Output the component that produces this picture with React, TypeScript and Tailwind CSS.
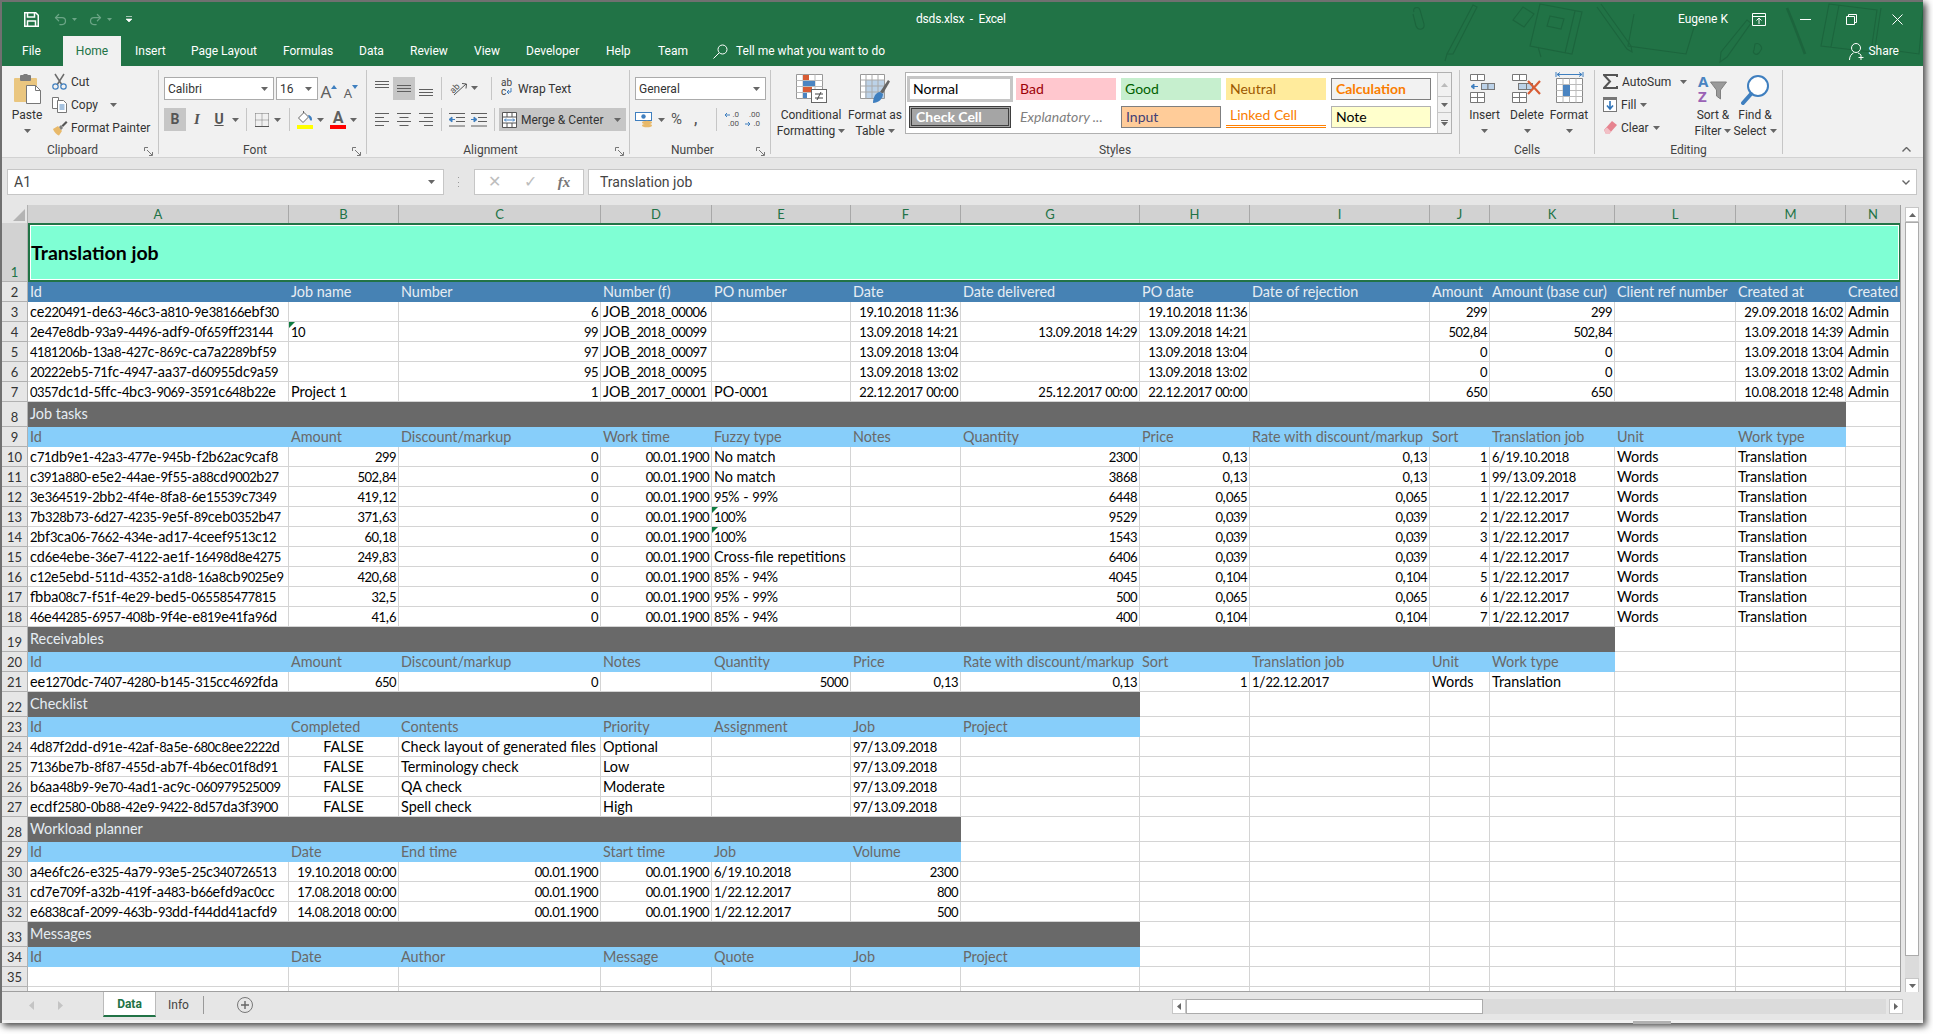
import { Redo2, Undo2 } from "lucide-react";
import type { ReactNode } from "react";

type Cell = string | { text: string; align?: "right" | "center"; mark?: boolean };

interface Row {
  n: number;
  kind: "title" | "head" | "band" | "sub" | "data";
  cells: Cell[];
  span?: number;
}

const R = (text: string): Cell => ({ text, align: "right" });
const C = (text: string): Cell => ({ text, align: "center" });
const M = (text: string): Cell => ({ text, mark: true });

const COLUMNS = ["A", "B", "C", "D", "E", "F", "G", "H", "I", "J", "K", "L", "M", "N"];
const COLUMN_WIDTHS: Record<string, string> = {
  A: "w-[261px]",
  B: "w-[110px]",
  C: "w-[202px]",
  D: "w-[111px]",
  E: "w-[139px]",
  F: "w-[110px]",
  G: "w-[179px]",
  H: "w-[110px]",
  I: "w-[180px]",
  J: "w-[60px]",
  K: "w-[125px]",
  L: "w-[121px]",
  M: "w-[110px]",
  N: "w-[55px]",
};

const SPANS: Record<number, string> = {
  6: "col-span-6",
  7: "col-span-7",
  11: "col-span-11",
  13: "col-span-13",
  14: "col-span-14",
};

const taskRow = (
  n: number,
  id: string,
  amount: string,
  fuzzy: Cell,
  qty: string,
  price: string,
  sort: string,
  job: string,
): Row => ({
  n,
  kind: "data",
  cells: [id, R(amount), R("0"), R("00.01.1900"), fuzzy, "", R(qty), R(price), R(price), R(sort), job, "Words", "Translation", ""],
});

const checkRow = (n: number, id: string, contents: string, priority: string): Row => ({
  n,
  kind: "data",
  cells: [id, C("FALSE"), contents, priority, "", "97/13.09.2018", ""],
});

const plannerRow = (n: number, id: string, date: string, job: string, volume: string): Row => ({
  n,
  kind: "data",
  cells: [id, R(date), R("00.01.1900"), R("00.01.1900"), job, R(volume)],
});

const ROWS: Row[] = [
  { n: 1, kind: "title", span: 14, cells: ["Translation job"] },
  {
    n: 2,
    kind: "head",
    cells: ["Id", "Job name", "Number", "Number (f)", "PO number", "Date", "Date delivered", "PO date", "Date of rejection", "Amount", "Amount (base cur)", "Client ref number", "Created at", "Created"],
  },
  {
    n: 3,
    kind: "data",
    cells: ["ce220491-de63-46c3-a810-9e38166ebf30", "", R("6"), "JOB_2018_00006", "", R("19.10.2018 11:36"), "", R("19.10.2018 11:36"), "", R("299"), R("299"), "", R("29.09.2018 16:02"), "Admin"],
  },
  {
    n: 4,
    kind: "data",
    cells: ["2e47e8db-93a9-4496-adf9-0f659ff23144", M("10"), R("99"), "JOB_2018_00099", "", R("13.09.2018 14:21"), R("13.09.2018 14:29"), R("13.09.2018 14:21"), "", R("502,84"), R("502,84"), "", R("13.09.2018 14:39"), "Admin"],
  },
  {
    n: 5,
    kind: "data",
    cells: ["4181206b-13a8-427c-869c-ca7a2289bf59", "", R("97"), "JOB_2018_00097", "", R("13.09.2018 13:04"), "", R("13.09.2018 13:04"), "", R("0"), R("0"), "", R("13.09.2018 13:04"), "Admin"],
  },
  {
    n: 6,
    kind: "data",
    cells: ["20222eb5-71fc-4947-aa37-d60955dc9a59", "", R("95"), "JOB_2018_00095", "", R("13.09.2018 13:02"), "", R("13.09.2018 13:02"), "", R("0"), R("0"), "", R("13.09.2018 13:02"), "Admin"],
  },
  {
    n: 7,
    kind: "data",
    cells: ["0357dc1d-5ffc-4bc3-9069-3591c648b22e", "Project 1", R("1"), "JOB_2017_00001", "PO-0001", R("22.12.2017 00:00"), R("25.12.2017 00:00"), R("22.12.2017 00:00"), "", R("650"), R("650"), "", R("10.08.2018 12:48"), "Admin"],
  },
  { n: 8, kind: "band", span: 13, cells: ["Job tasks"] },
  {
    n: 9,
    kind: "sub",
    cells: ["Id", "Amount", "Discount/markup", "Work time", "Fuzzy type", "Notes", "Quantity", "Price", "Rate with discount/markup", "Sort", "Translation job", "Unit", "Work type"],
  },
  taskRow(10, "c71db9e1-42a3-477e-945b-f2b62ac9caf8", "299", "No match", "2300", "0,13", "1", "6/19.10.2018"),
  taskRow(11, "c391a880-e5e2-44ae-9f55-a88cd9002b27", "502,84", "No match", "3868", "0,13", "1", "99/13.09.2018"),
  taskRow(12, "3e364519-2bb2-4f4e-8fa8-6e15539c7349", "419,12", "95% - 99%", "6448", "0,065", "1", "1/22.12.2017"),
  taskRow(13, "7b328b73-6d27-4235-9e5f-89ceb0352b47", "371,63", M("100%"), "9529", "0,039", "2", "1/22.12.2017"),
  taskRow(14, "2bf3ca06-7662-434e-ad17-4ceef9513c12", "60,18", M("100%"), "1543", "0,039", "3", "1/22.12.2017"),
  taskRow(15, "cd6e4ebe-36e7-4122-ae1f-16498d8e4275", "249,83", "Cross-file repetitions", "6406", "0,039", "4", "1/22.12.2017"),
  taskRow(16, "c12e5ebd-511d-4352-a1d8-16a8cb9025e9", "420,68", "85% - 94%", "4045", "0,104", "5", "1/22.12.2017"),
  taskRow(17, "fbba08c7-f51f-4e29-bed5-065585477815", "32,5", "95% - 99%", "500", "0,065", "6", "1/22.12.2017"),
  taskRow(18, "46e44285-6957-408b-9f4e-e819e41fa96d", "41,6", "85% - 94%", "400", "0,104", "7", "1/22.12.2017"),
  { n: 19, kind: "band", span: 11, cells: ["Receivables"] },
  {
    n: 20,
    kind: "sub",
    cells: ["Id", "Amount", "Discount/markup", "Notes", "Quantity", "Price", "Rate with discount/markup", "Sort", "Translation job", "Unit", "Work type"],
  },
  {
    n: 21,
    kind: "data",
    cells: ["ee1270dc-7407-4280-b145-315cc4692fda", R("650"), R("0"), "", R("5000"), R("0,13"), R("0,13"), R("1"), "1/22.12.2017", "Words", "Translation"],
  },
  { n: 22, kind: "band", span: 7, cells: ["Checklist"] },
  { n: 23, kind: "sub", cells: ["Id", "Completed", "Contents", "Priority", "Assignment", "Job", "Project"] },
  checkRow(24, "4d87f2dd-d91e-42af-8a5e-680c8ee2222d", "Check layout of generated files", "Optional"),
  checkRow(25, "7136be7b-8f87-455d-ab7f-4b6ec01f8d91", "Terminology check", "Low"),
  checkRow(26, "b6aa48b9-9e70-4ad1-ac9c-060979525009", "QA check", "Moderate"),
  checkRow(27, "ecdf2580-0b88-42e9-9422-8d57da3f3900", "Spell check", "High"),
  { n: 28, kind: "band", span: 6, cells: ["Workload planner"] },
  { n: 29, kind: "sub", cells: ["Id", "Date", "End time", "Start time", "Job", "Volume"] },
  plannerRow(30, "a4e6fc26-e325-4a79-93e5-25c340726513", "19.10.2018 00:00", "6/19.10.2018", "2300"),
  plannerRow(31, "cd7e709f-a32b-419f-a483-b66efd9ac0cc", "17.08.2018 00:00", "1/22.12.2017", "800"),
  plannerRow(32, "e6838caf-2099-463b-93dd-f44dd41acfd9", "14.08.2018 00:00", "1/22.12.2017", "500"),
  { n: 33, kind: "band", span: 7, cells: ["Messages"] },
  { n: 34, kind: "sub", cells: ["Id", "Date", "Author", "Message", "Quote", "Job", "Project"] },
  { n: 35, kind: "data", cells: [] },
  { n: 36, kind: "data", cells: [] },
];

const TABS = [
  { label: "File", cls: "w-[61px] pl-[20px]" },
  { label: "Home", cls: "w-[58px] justify-center bg-[#f1f1f1] text-[#217346]" },
  { label: "Insert", cls: "w-[70px] pl-[14px]" },
  { label: "Page Layout", cls: "w-[92px]" },
  { label: "Formulas", cls: "w-[76px]" },
  { label: "Data", cls: "w-[51px]" },
  { label: "Review", cls: "w-[64px]" },
  { label: "View", cls: "w-[52px]" },
  { label: "Developer", cls: "w-[80px]" },
  { label: "Help", cls: "w-[52px]" },
  { label: "Team", cls: "w-[55px]" },
];

function Caret({ className = "" }: { className?: string }) {
  return (
    <svg width="7" height="4" viewBox="0 0 7 4" className={`shrink-0 ${className}`}>
      <path d="M0 0h7L3.5 4z" fill="#666" />
    </svg>
  );
}

function Sep({ className = "" }: { className?: string }) {
  return <div className={`h-[23px] w-px shrink-0 bg-[#c6c6c6] ${className}`} />;
}

function Lines({ widths, gap = 4, align = "left" }: { widths: number[]; gap?: number; align?: "left" | "center" | "right" }) {
  return (
    <svg width="14" height={(widths.length - 1) * gap + 2} className="shrink-0">
      {widths.map((w, i) => {
        const x = align === "left" ? 0 : align === "right" ? 14 - w : (14 - w) / 2;
        return <rect key={i} x={x} y={i * gap} width={w} height="1" fill="#5f5f5f" />;
      })}
    </svg>
  );
}

function PasteIcon() {
  return (
    <svg width="29" height="30" viewBox="0 0 29 30">
      <rect x="1" y="4" width="23" height="24" rx="1" fill="#eac67f" />
      <rect x="7" y="1" width="11" height="6" rx="1" fill="#7c7c7c" />
      <rect x="10.5" y="0" width="4" height="3" fill="#7c7c7c" />
      <path d="M13.5 11.5h9l5 5v13h-14z" fill="#fff" stroke="#777" />
      <path d="M22.5 11.5v5h5" fill="none" stroke="#777" />
    </svg>
  );
}

function CutIcon() {
  return (
    <svg width="15" height="17" viewBox="0 0 15 17">
      <path d="M3 1l7 11M12 1L5 12" stroke="#6b6b6b" strokeWidth="1.5" fill="none" />
      <circle cx="3.5" cy="13.5" r="2.7" stroke="#3f7fbf" strokeWidth="1.2" fill="none" />
      <circle cx="11.5" cy="13.5" r="2.7" stroke="#3f7fbf" strokeWidth="1.2" fill="none" />
    </svg>
  );
}

function CopyIcon() {
  return (
    <svg width="15" height="16" viewBox="0 0 15 16">
      <path d="M.5.5h6v11h-6z" fill="#fff" stroke="#777" />
      <path d="M5.5 3.5h6l3 3v9h-9z" fill="#fff" stroke="#777" />
      <path d="M7.5 8h5M7.5 10h5M7.5 12h5" stroke="#4c86c0" />
    </svg>
  );
}

function PainterIcon() {
  return (
    <svg width="16" height="16" viewBox="0 0 16 16">
      <path d="M1 9l5-3 4 5-3 4.5C5 15 2 12 1 9z" fill="#e8b96a" />
      <path d="M7 7l2-2 2 3-2 2z" fill="#7c7c7c" />
      <path d="M9.5 5.5L14 1l1.5 1.5L11 7z" fill="#555" />
    </svg>
  );
}

function FontSizeIcon({ up }: { up: boolean }) {
  return (
    <div className={`flex w-[22px] shrink-0 items-end justify-center font-['Noto_Sans',sans-serif] leading-none text-[#5f5f5f] ${up ? "text-[17px]" : "text-[13px]"}`}>
      <span>A</span>
      <svg width="6" height="4" viewBox="0 0 6 4" className="mb-[11px]">
        <path d={up ? "M0 4h6L3 0z" : "M0 0h6L3 4z"} fill="#3f7fbf" />
      </svg>
    </div>
  );
}

function BorderIcon() {
  return (
    <svg width="14" height="14" viewBox="0 0 14 14" className="shrink-0">
      <path d="M.5.5h13M.5 7h13M.5.5v13M7 .5v13M13.5.5v13" stroke="#777" strokeDasharray="1 1" fill="none" />
      <path d="M0 13.5h14" stroke="#555" />
    </svg>
  );
}

function FillColorIcon() {
  return (
    <div className="flex w-[16px] shrink-0 flex-col items-center">
      <svg width="16" height="13" viewBox="0 0 16 13">
        <path d="M1.5 7L7 1.5 11.5 6 6 11.5z" fill="#fff" stroke="#666" />
        <path d="M6.5 2V0" stroke="#666" />
        <path d="M11 4c2 0 4 2 4 4s-1 2-2 1z" fill="#3f7fbf" />
      </svg>
      <div className="mt-[1px] h-[4px] w-[16px] bg-[#ffff00]" />
    </div>
  );
}

function FontColorIcon() {
  return (
    <div className="flex w-[16px] shrink-0 flex-col items-center">
      <span className="h-[13px] text-[16px] leading-[13px] font-bold text-[#5f5f5f]">A</span>
      <div className="mt-[1px] h-[4px] w-[16px] bg-[#ff0000]" />
    </div>
  );
}

function OrientIcon() {
  return (
    <svg width="19" height="17" viewBox="0 0 19 17" className="shrink-0">
      <text x="1" y="12" fontSize="9" fill="#555" transform="rotate(-45 5 9)" fontFamily="Roboto">ab</text>
      <path d="M5 15L17 4M13 3.5l4.5.5-.5 4.5" stroke="#555" fill="none" />
    </svg>
  );
}

function IndentIcon({ inc }: { inc: boolean }) {
  return (
    <svg width="16" height="14" viewBox="0 0 16 14" className="shrink-0">
      <path d="M0 .5h16M7 4.5h9M7 8.5h9M0 13h16" stroke="#5f5f5f" fill="none" />
      {inc ? (
        <path d="M0 6.5h5M3 4l3 2.5L3 9z" stroke="#3f7fbf" fill="#3f7fbf" />
      ) : (
        <path d="M6 6.5H1M3 4L0 6.5 3 9z" stroke="#3f7fbf" fill="#3f7fbf" />
      )}
    </svg>
  );
}

function WrapIcon() {
  return (
    <div className="relative h-[18px] w-[14px] shrink-0 font-['Roboto',sans-serif] text-[10px] leading-[9px] text-[#444]">
      <div>ab</div>
      <div className="flex items-center">
        c
        <svg width="6" height="7" viewBox="0 0 6 7">
          <path d="M5 0v4H1M3 2L1 4l2 2" stroke="#3f7fbf" fill="none" />
        </svg>
      </div>
    </div>
  );
}

function MergeIcon() {
  return (
    <svg width="15" height="16" viewBox="0 0 15 16" className="shrink-0">
      <path d="M.5.5h14v15H.5zM.5 5h14M.5 11h14M5 11v4.5M10 11v4.5M5 .5V5M10 .5V5" fill="#fff" stroke="#555" />
      <path d="M2.5 8h10M4 6.5L2.5 8 4 9.5M11 6.5L12.5 8 11 9.5" stroke="#3f7fbf" fill="none" />
    </svg>
  );
}

function CurrencyIcon() {
  return (
    <svg width="19" height="17" viewBox="0 0 19 17" className="shrink-0">
      <rect x="0.5" y="1.5" width="16" height="8" fill="#fff" stroke="#3f7fbf" />
      <circle cx="8.5" cy="5.5" r="2.2" fill="#3f7fbf" />
      <ellipse cx="12" cy="11.5" rx="5" ry="1.8" fill="#e8b96a" />
      <ellipse cx="12" cy="14.5" rx="5" ry="1.8" fill="#e8b96a" />
    </svg>
  );
}

function DecimalIcon({ inc }: { inc: boolean }) {
  return (
    <div className="flex w-[15px] shrink-0 flex-col font-['Roboto',sans-serif] text-[8px] leading-[8px] text-[#555]">
      <div className="flex items-center justify-between">
        {inc ? (
          <svg width="6" height="6" viewBox="0 0 6 6">
            <path d="M6 3H1M3 1L1 3l2 2" stroke="#3f7fbf" fill="none" />
          </svg>
        ) : (
          <span />
        )}
        <span>{inc ? ".0" : ".00"}</span>
      </div>
      <div className="mt-[1px] flex items-center justify-between">
        {inc ? (
          <span />
        ) : (
          <svg width="6" height="6" viewBox="0 0 6 6">
            <path d="M0 3h5M3 1l2 2-2 2" stroke="#3f7fbf" fill="none" />
          </svg>
        )}
        <span>{inc ? ".00" : ".0"}</span>
      </div>
    </div>
  );
}

function CondFormatIcon() {
  return (
    <svg width="31" height="29" viewBox="0 0 31 29">
      <path d="M.5.5h26v24H.5z" fill="#fff" stroke="#999" />
      <path d="M.5 6.5h26M.5 12.5h26M.5 18.5h26M7 .5v24M19 .5v24" stroke="#bbb" fill="none" />
      <rect x="7" y="1" width="6" height="5" fill="#d85c34" />
      <rect x="7" y="7" width="12" height="5" fill="#4a84c1" />
      <rect x="7" y="13" width="9" height="5" fill="#d85c34" />
      <rect x="7" y="19" width="4" height="5" fill="#4a84c1" />
      <rect x="15.5" y="15.5" width="15" height="13" fill="#fff" stroke="#666" />
      <path d="M19 20h8M19 24h8M25 18l-4 8" stroke="#444" fill="none" />
    </svg>
  );
}

function TableFormatIcon() {
  return (
    <svg width="30" height="30" viewBox="0 0 30 30">
      <path d="M.5.5h24v24H.5z" fill="#fff" stroke="#999" />
      <rect x="5" y="6" width="19" height="18" fill="#bcd2e8" />
      <path d="M.5 6h24M.5 12h24M.5 18h24M6 .5v24M12 .5v24M18 .5v24" stroke="#aaa" fill="none" />
      <path d="M20 18l8-12 2 1.5-7 12z" fill="#666" />
      <path d="M13 29c0-6 3-11 7-11l3 2c0 5-5 9-10 9z" fill="#3f7fbf" />
    </svg>
  );
}

function CellsIcon({ kind }: { kind: "insert" | "delete" }) {
  return (
    <svg width="30" height="29" viewBox="0 0 30 29">
      <path d="M.5.5h14v6H.5zM7.5.5v6" fill="#fff" stroke="#777" />
      <path d="M.5 18.5h14v10H.5zM7.5 18.5v10M.5 23.5h14" fill="#fff" stroke="#777" />
      {kind === "insert" ? (
        <>
          <path d="M1 12.5h7M4 10l-3 2.5L4 15z" stroke="#3f7fbf" fill="#3f7fbf" />
          <rect x="11.5" y="9.5" width="6.5" height="6" fill="#bcd2e8" stroke="#777" />
          <rect x="18" y="9.5" width="6.5" height="6" fill="#bcd2e8" stroke="#777" />
        </>
      ) : (
        <>
          <rect x="6.5" y="9.5" width="8" height="6" fill="#bcd2e8" stroke="#777" />
          <rect x="14.5" y="9.5" width="6" height="6" fill="#bcd2e8" stroke="#777" />
          <path d="M16 7l12 13M28 7L16 20" stroke="#d85c34" strokeWidth="2.2" fill="none" />
        </>
      )}
    </svg>
  );
}

function FormatCellsIcon() {
  return (
    <svg width="29" height="36" viewBox="0 0 29 36" className="-mt-[3px]">
      <path d="M1 1v5M28 1v5M2 3.5h25M2 3.5l3-2M2 3.5l3 2M27 3.5l-3-2M27 3.5l-3 2" stroke="#3f7fbf" fill="none" />
      <path d="M1.5 7.5h26v24h-26z" fill="#fff" stroke="#888" />
      <path d="M1.5 13.5h26M1.5 19.5h26M1.5 25.5h26M8 7.5v24M21 7.5v24M14.5 7.5v24" stroke="#bbb" fill="none" />
      <rect x="8" y="14" width="7" height="11" fill="#4a84c1" />
    </svg>
  );
}

function FillIcon() {
  return (
    <svg width="14" height="15" viewBox="0 0 14 15" className="shrink-0">
      <rect x="0.5" y="0.5" width="13" height="14" fill="#fff" stroke="#777" />
      <rect x="0" y="0" width="14" height="3" fill="#777" />
      <path d="M7 4v8M4 8.5L7 12l3-3.5" stroke="#2f73b8" strokeWidth="1.6" fill="none" />
    </svg>
  );
}

function EraserIcon() {
  return (
    <svg width="14" height="15" viewBox="0 0 14 15" className="shrink-0">
      <path d="M1 10L9 1l5 4-8 9H3z" fill="#e6838f" />
      <path d="M1 10l2 4h3l2-2.5-4-4z" fill="#f2c0c6" />
    </svg>
  );
}

function SortIcon() {
  return (
    <div className="flex h-[30px] w-[30px] font-['Noto_Sans',sans-serif] text-[15px] leading-[15px] font-bold">
      <div className="flex w-[12px] flex-col">
        <span className="text-[#4a84c1]">A</span>
        <span className="text-[#9a62b5]">Z</span>
      </div>
      <svg width="17" height="20" viewBox="0 0 17 20" className="mt-[7px]">
        <path d="M.5 1h16l-6 8v9l-4-3V9z" fill="#9a9a9a" stroke="#808080" />
      </svg>
    </div>
  );
}

function FindIcon() {
  return (
    <svg width="29" height="31" viewBox="0 0 29 31">
      <circle cx="17" cy="12" r="10" fill="#fff" stroke="#3f7fbf" strokeWidth="2" />
      <path d="M10 20L2 29" stroke="#3f7fbf" strokeWidth="4" strokeLinecap="round" />
    </svg>
  );
}

function BigButton({ icon, lines, caret }: { icon: ReactNode; lines: string[]; caret?: boolean }) {
  return (
    <div className="flex flex-col items-center pt-[4px]">
      <div className="flex h-[33px] shrink-0 items-start justify-center">{icon}</div>
      {lines.map((line, i) => (
        <div key={line} className="flex h-[16px] shrink-0 items-center gap-[3px] whitespace-nowrap leading-[16px]">
          {line}
          {caret && i === lines.length - 1 && <Caret />}
        </div>
      ))}
      {lines.length === 1 && (
        <div className="flex h-[16px] shrink-0 items-center">
          <Caret />
        </div>
      )}
    </div>
  );
}

function Launcher() {
  return (
    <svg width="9" height="9" viewBox="0 0 9 9" className="absolute right-[5px] top-[5px]">
      <path d="M.5 4V.5H4M3 3l5 5M8.5 5v3.5H5" stroke="#777" fill="none" />
    </svg>
  );
}

function Group({ w, label, launcher, children }: { w: string; label: string; launcher?: boolean; children: ReactNode }) {
  return (
    <div className={`mt-[4px] h-[84px] shrink-0 border-r border-[#c6c6c6] ${w}`}>
      <div className="h-[69px]">{children}</div>
      <div className={`relative mt-[3px] h-[16px] text-center leading-[16px] text-[#444] ${launcher ? "pr-[15px]" : ""}`}>
        {label}
        {launcher && <Launcher />}
      </div>
    </div>
  );
}

function StyleCell({ children, cls }: { children: ReactNode; cls: string }) {
  return (
    <div className={`flex h-[22px] items-center overflow-hidden whitespace-nowrap pb-[2px] pl-[4px] font-['Lato',sans-serif] text-[14px] ${cls}`}>
      {children}
    </div>
  );
}

function Doodles() {
  return (
    <svg
      width="540"
      height="62"
      viewBox="0 0 540 62"
      className="pointer-events-none absolute right-0 top-0"
      fill="none"
      stroke="#1c653d"
      strokeWidth="1.1"
    >
      <path d="M31 10c-2-5 5-6 6-2l4 14c1 6-6 7-8 2l-3-12" />
      <path d="M64 52L90 3l4 2-24 47zM64 52l-2 7" />
      <path d="M130 18l10-13 11 7-10 13z" />
      <path d="M157 2l42 8-10 42-42-8zM192 9l-10 42M155 45l3 10M167 14l14 3-3 10-14-3z" />
      <path d="M218 2l30 42 1 6-5-3-30-42" />
      <path d="M251 12l-6 32 58 8 12-40" />
      <path d="M338 50l26-32 4 3-24 34-7 5z" />
      <path d="M372 42c4-2 8 3 6 6l-2 3c-3 3-7 0-5-3z" />
      <path d="M404 6c6 14 12 30 18 46" strokeWidth="2.6" />
      <path d="M446 2l48 6-6 42-50-6zM456 3l-8 42" />
      <path d="M498 6l-6 40 44 6 4-44" />
    </svg>
  );
}

function Ribbon() {
  return (
    <div className="flex h-[92px] shrink-0 border-b border-[#d2d2d2] bg-[#f1f1f1] text-[12px] text-[#333]">
      <Group w="w-[157px]" label="Clipboard" launcher>
        <div className="flex">
          <div className="w-[50px]">
            <BigButton icon={<PasteIcon />} lines={["Paste"]} />
          </div>
          <div className="flex flex-col">
            <div className="flex h-[23px] items-center gap-[4px]"><CutIcon />Cut</div>
            <div className="flex h-[23px] items-center gap-[4px]"><CopyIcon />Copy<Caret className="ml-[8px]" /></div>
            <div className="flex h-[23px] items-center gap-[3px]"><PainterIcon />Format Painter</div>
          </div>
        </div>
      </Group>

      <Group w="w-[208px]" label="Font" launcher>
        <div className="flex pl-[5px] pt-[7px]">
          <div className="flex h-[23px] w-[110px] items-center justify-between border border-[#ababab] bg-white pl-[3px] pr-[5px]">Calibri<Caret /></div>
          <div className="ml-[2px] flex h-[23px] w-[42px] items-center justify-between border border-[#ababab] bg-white pl-[3px] pr-[5px]">16<Caret /></div>
          <FontSizeIcon up />
          <FontSizeIcon up={false} />
        </div>
        <div className="mt-[8px] flex h-[23px] items-center pl-[5px]">
          <div className="flex h-[23px] w-[22px] items-center justify-center bg-[#c6c6c6] font-['Roboto',sans-serif] text-[14px] font-bold text-[#555]">B</div>
          <div className="w-[22px] text-center font-['Liberation_Serif',serif] text-[15px] font-bold italic text-[#555]">I</div>
          <div className="w-[22px] text-center font-['Roboto',sans-serif] text-[14px] font-bold text-[#555] underline">U</div>
          <Caret className="ml-[2px]" />
          <Sep className="ml-[7px]" />
          <div className="ml-[8px]"><BorderIcon /></div>
          <Caret className="ml-[5px]" />
          <Sep className="ml-[8px]" />
          <div className="ml-[7px] flex items-center"><FillColorIcon /></div>
          <Caret className="ml-[4px]" />
          <div className="ml-[6px]"><FontColorIcon /></div>
          <Caret className="ml-[4px]" />
        </div>
      </Group>

      <Group w="w-[263px]" label="Alignment" launcher>
        <div className="flex h-[30px] items-start pl-[8px] pt-[7px]">
          <div className="mt-[4px]"><Lines widths={[14, 14, 14]} gap={3} /></div>
          <div className="ml-[4px] flex h-[23px] w-[22px] items-center justify-center bg-[#c6c6c6]"><Lines widths={[14, 14, 14]} gap={3} /></div>
          <div className="ml-[4px] mt-[12px]"><Lines widths={[14, 14, 14]} gap={3} /></div>
          <Sep className="ml-[8px]" />
          <div className="ml-[7px] mt-[3px]"><OrientIcon /></div>
          <Caret className="ml-[3px] mt-[9px]" />
          <Sep className="ml-[13px]" />
          <div className="ml-[9px] mt-[1px]"><WrapIcon /></div>
          <span className="ml-[3px] mt-[3px]">Wrap Text</span>
        </div>
        <div className="mt-[8px] flex h-[23px] items-center pl-[8px]">
          <Lines widths={[14, 9, 14, 9]} />
          <div className="ml-[8px]"><Lines widths={[14, 9, 14, 9]} align="center" /></div>
          <div className="ml-[8px]"><Lines widths={[14, 9, 14, 9]} align="right" /></div>
          <Sep className="ml-[8px]" />
          <div className="ml-[7px]"><IndentIcon inc={false} /></div>
          <div className="ml-[6px]"><IndentIcon inc /></div>
          <Sep className="ml-[7px]" />
          <div className="ml-[4px] flex h-[23px] w-[127px] items-center bg-[#c6c6c6] pl-[3px]">
            <MergeIcon />
            <span className="ml-[4px]">Merge &amp; Center</span>
            <Caret className="ml-[11px]" />
          </div>
        </div>
      </Group>

      <Group w="w-[141px]" label="Number" launcher>
        <div className="pl-[5px] pt-[7px]">
          <div className="flex h-[23px] w-[131px] items-center justify-between border border-[#ababab] bg-white pl-[3px] pr-[5px]">General<Caret /></div>
        </div>
        <div className="mt-[8px] flex h-[23px] items-center pl-[5px]">
          <CurrencyIcon />
          <Caret className="ml-[4px]" />
          <span className="ml-[6px] w-[16px] text-[15px] text-[#555]">%</span>
          <span className="ml-[7px] w-[8px] text-[14px] font-bold text-[#555]">,</span>
          <Sep className="ml-[14px]" />
          <div className="ml-[7px]"><DecimalIcon inc /></div>
          <div className="ml-[6px]"><DecimalIcon inc={false} /></div>
        </div>
      </Group>

      <Group w="w-[689px]" label="Styles">
        <div className="flex">
          <div className="w-[80px]">
            <BigButton icon={<CondFormatIcon />} lines={["Conditional", "Formatting"]} caret />
          </div>
          <div className="w-[48px]">
            <BigButton icon={<TableFormatIcon />} lines={["Format as", "Table"]} caret />
          </div>
          <div className="ml-[6px] mt-[2px] flex h-[62px] w-[547px] border border-[#b0b0b0] bg-white">
            <div className="grid grid-cols-[102px_100px_100px_100px_100px] grid-rows-[22px_22px] gap-x-[5px] gap-y-[6px] pl-[3px] pt-[5px]">
              <StyleCell cls="outline-3 -outline-offset-1 outline-[#c6c6c6] text-black">Normal</StyleCell>
              <StyleCell cls="bg-[#ffc7ce] text-[#9c0006]">Bad</StyleCell>
              <StyleCell cls="bg-[#c6efce] text-[#006100]">Good</StyleCell>
              <StyleCell cls="bg-[#ffeb9c] text-[#9c5700]">Neutral</StyleCell>
              <StyleCell cls="border border-[#7f7f7f] bg-[#f2f2f2] font-bold text-[#fa7d00]">Calculation</StyleCell>
              <StyleCell cls="border-[3px] border-double border-[#3f3f3f] bg-[#a5a5a5] font-bold text-white">Check Cell</StyleCell>
              <StyleCell cls="italic text-[#7f7f7f]">Explanatory ...</StyleCell>
              <StyleCell cls="border border-[#7f7f7f] bg-[#ffcc99] text-[#3f3f76]">Input</StyleCell>
              <StyleCell cls="border-b-[3px] border-double border-[#ff8001] text-[#fa7d00]">Linked Cell</StyleCell>
              <StyleCell cls="border border-[#b2b2b2] bg-[#ffffcc] text-black">Note</StyleCell>
            </div>
            <div className="ml-auto flex w-[14px] flex-col border-l border-[#c6c6c6] bg-[#f1f1f1]">
              <div className="flex h-[24px] items-center justify-center border-b border-[#c6c6c6]">
                <svg width="7" height="4" viewBox="0 0 7 4"><path d="M0 4h7L3.5 0z" fill="#bbb" /></svg>
              </div>
              <div className="flex h-[16px] items-center justify-center border-b border-[#c6c6c6]"><Caret /></div>
              <div className="flex flex-1 flex-col items-center justify-center gap-[1px]">
                <div className="h-px w-[7px] bg-[#666]" />
                <Caret />
              </div>
            </div>
          </div>
        </div>
      </Group>

      <Group w="w-[135px]" label="Cells">
        <div className="flex pl-[3px]">
          <div className="w-[43px]"><BigButton icon={<CellsIcon kind="insert" />} lines={["Insert"]} /></div>
          <div className="w-[42px]"><BigButton icon={<CellsIcon kind="delete" />} lines={["Delete"]} /></div>
          <div className="w-[42px]"><BigButton icon={<FormatCellsIcon />} lines={["Format"]} /></div>
        </div>
      </Group>

      <Group w="w-[188px]" label="Editing">
        <div className="flex">
          <div className="flex w-[97px] flex-col pl-[8px]">
            <div className="flex h-[23px] items-center">
              <svg width="15" height="15" viewBox="0 0 15 15" className="mr-[4px] shrink-0"><path d="M14 3V1H1l6 6.5L1 14h13v-2" fill="none" stroke="#555" strokeWidth="2" /></svg>
              AutoSum
              <Caret className="ml-[9px]" />
            </div>
            <div className="flex h-[23px] items-center gap-[4px]"><FillIcon />Fill<Caret /></div>
            <div className="flex h-[23px] items-center gap-[4px]"><EraserIcon />Clear<Caret /></div>
          </div>
          <div className="w-[42px]"><BigButton icon={<SortIcon />} lines={["Sort &", "Filter"]} caret /></div>
          <div className="w-[42px]"><BigButton icon={<FindIcon />} lines={["Find &", "Select"]} caret /></div>
        </div>
      </Group>

      <div className="relative flex-1">
        <svg width="9" height="5" viewBox="0 0 9 5" className="absolute bottom-[5px] right-[12px]"><path d="M.5 4.5l4-4 4 4" stroke="#666" strokeWidth="1.4" fill="none" /></svg>
      </div>
    </div>
  );
}

// Lato's digits run wider than Calibri's, so digit runs get a smaller size and tighter spacing
function CellText({ text }: { text: string }) {
  return (
    <span>
      {text.split(/(\d+)/).map((part, i) =>
        i % 2 === 1 ? (
          <span key={i} className="text-[13px] tracking-[-0.5px]">{part}</span>
        ) : (
          part
        ),
      )}
    </span>
  );
}

function SheetCell({ cell }: { cell?: Cell }) {
  const c = typeof cell === "string" || cell === undefined ? { text: cell ?? "" } : cell;
  const align = "align" in c ? c.align : undefined;
  const mark = "mark" in c ? c.mark : false;
  return (
    <div
      className={`relative flex items-end whitespace-nowrap border-b border-r border-[#d4d4d4] bg-white ${
        align === "right" ? "justify-end pr-[2px]" : align === "center" ? "justify-center" : "pl-[2px]"
      }`}
    >
      {mark && (
        <svg width="6" height="6" viewBox="0 0 6 6" className="absolute left-0 top-0">
          <path d="M0 0h6L0 6z" fill="#107c41" />
        </svg>
      )}
      <CellText text={c.text} />
    </div>
  );
}

function Sheet() {
  return (
    <div className="grid grid-cols-[26px_261px_110px_202px_111px_139px_110px_179px_110px_180px_60px_125px_121px_110px_55px] font-['Lato',sans-serif] text-[14.4px] leading-[18px] text-black">
      <div className="flex h-[18px] items-end justify-end border-r border-[#b1b1b1] bg-[#e6e6e6] pb-[2px] pr-[2px]">
        <svg width="12" height="12" viewBox="0 0 12 12"><path d="M12 0v12H0z" fill="#b4b4b4" /></svg>
      </div>
      {COLUMNS.map((col) => (
        <div key={col} className={`flex h-[18px] items-center justify-center border-r border-[#a8a8a8] bg-[#d2d2d2] text-[13px] text-[#217346] ${COLUMN_WIDTHS[col]}`}>
          {col}
        </div>
      ))}

      {ROWS.map((row) => {
        const tall = row.kind === "band";
        const base = `${row.kind === "title" ? "h-[59px]" : tall ? "h-[25px]" : "h-[20px]"}`;
        const number = (
          <div
            key={`n${row.n}`}
            className={`flex items-end justify-center border-b border-r border-[#b1b1b1] text-[13px] ${base} ${
              row.n === 1 ? "bg-[#d2d2d2] text-[#217346]" : "bg-[#e6e6e6] text-[#333]"
            }`}
          >
            {row.n < 36 ? row.n : ""}
          </div>
        );
        if (row.kind === "title") {
          return [
            number,
            <div
              key="title"
              className={`flex items-center bg-[#7fffd4] pl-[3px] text-[19.5px] font-bold shadow-[inset_0_0_0_2px_#217346,inset_0_0_0_3px_#ffffff] ${SPANS[14]}`}
            >
              {row.cells[0] as string}
            </div>,
          ];
        }
        if (row.kind === "band") {
          const rest = 14 - (row.span ?? 14);
          return [
            number,
            <div key={`b${row.n}`} className={`flex items-center bg-[#696969] pb-[1px] pl-[2px] text-[#e6edf3] ${SPANS[row.span ?? 14]}`}>
              {row.cells[0] as string}
            </div>,
            ...Array.from({ length: rest }, (_, i) => <SheetCell key={`b${row.n}-${i}`} />),
          ];
        }
        if (row.kind === "head" || row.kind === "sub") {
          const fill = row.kind === "head" ? "bg-[#4682b4] text-[#e6edf3]" : "bg-[#87cefa] text-[#696969]";
          return [
            number,
            ...row.cells.map((text, i) => (
              <div key={`h${row.n}-${i}`} className={`flex items-center overflow-hidden whitespace-nowrap pl-[2px] ${fill}`}>
                {text as string}
              </div>
            )),
            ...Array.from({ length: 14 - row.cells.length }, (_, i) => <SheetCell key={`h${row.n}-r${i}`} />),
          ];
        }
        return [
          number,
          ...COLUMNS.map((col, i) => <SheetCell key={`${col}${row.n}`} cell={row.cells[i]} />),
        ];
      })}
    </div>
  );
}

export default function App() {
  return (
    <div className="h-[1034px] w-[1933px] overflow-hidden bg-white font-['Roboto',sans-serif]">
      <div className="flex h-[1023px] w-[1923px] flex-col border-l-2 border-t-2 border-[#707070] bg-[#e6e6e6] shadow-[3px_3px_7px_rgba(0,0,0,0.75)]">
        {/* Title bar */}
        <div className="relative h-[64px] shrink-0 bg-[#217346] text-[12px] text-white">
          <Doodles />
          <div className="relative flex h-[34px] items-center">
            <svg width="15" height="15" viewBox="0 0 15 15" className="ml-[22px]">
              <path d="M.75.75h11l2.5 2.5v11H.75z" fill="none" stroke="#fff" strokeWidth="1.5" />
              <path d="M3.5 1v4h7V1M3.5 14V9h8v5" fill="none" stroke="#fff" strokeWidth="1.5" />
            </svg>
            <Undo2 className="ml-[14px] h-[15px] w-[15px] text-[#6ba586]" strokeWidth={2} />
            <svg width="5" height="3" viewBox="0 0 5 3" className="ml-[4px]"><path d="M0 0h5L2.5 3z" fill="#6ba586" /></svg>
            <Redo2 className="ml-[11px] h-[15px] w-[15px] text-[#6ba586]" strokeWidth={2} />
            <svg width="5" height="3" viewBox="0 0 5 3" className="ml-[4px]"><path d="M0 0h5L2.5 3z" fill="#6ba586" /></svg>
            <svg width="6" height="6" viewBox="0 0 6 6" className="ml-[14px]"><path d="M0 .5h6M0 3h6L3 6z" fill="#fff" stroke="#fff" strokeWidth=".6" /></svg>
            <span className="ml-[784px] w-[88px] whitespace-nowrap tracking-[-0.2px]">dsds.xlsx&nbsp;&nbsp;-&nbsp;&nbsp;Excel</span>
            <span className="ml-[674px] w-[52px] whitespace-nowrap">Eugene K</span>
            <svg width="14" height="13" viewBox="0 0 14 13" className="ml-[22px]">
              <path d="M.5.5h13v12H.5zM.5 3.5h13M7 11V5.5M4.5 7.5L7 5l2.5 2.5" fill="none" stroke="#fff" />
            </svg>
            <svg width="11" height="1" viewBox="0 0 11 1" className="ml-[34px]"><path d="M0 .5h11" stroke="#fff" /></svg>
            <svg width="11" height="11" viewBox="0 0 11 11" className="ml-[35px]"><path d="M.5 2.5h8v8h-8zM2.5 2.5v-2h8v8h-2" fill="none" stroke="#fff" /></svg>
            <svg width="11" height="11" viewBox="0 0 11 11" className="ml-[35px]"><path d="M.5.5l10 10M10.5.5l-10 10" stroke="#fff" /></svg>
          </div>
          <div className="relative flex h-[30px]">
            {TABS.map((tab) => (
              <div key={tab.label} className={`flex h-[30px] items-center ${tab.cls}`}>
                {tab.label}
              </div>
            ))}
            <svg width="15" height="15" viewBox="0 0 15 15" className="ml-[0px] mt-[8px]">
              <circle cx="9.5" cy="5.5" r="4.5" fill="none" stroke="#fff" />
              <path d="M6 9l-5.5 5.5" stroke="#fff" />
            </svg>
            <div className="ml-[8px] flex h-[30px] items-center whitespace-nowrap">Tell me what you want to do</div>
            <div className="ml-auto mr-[24px] flex h-[30px] items-center gap-[3px]">
              <svg width="16" height="19" viewBox="0 0 16 19">
                <circle cx="7" cy="6" r="4.5" fill="none" stroke="#fff" />
                <path d="M.5 18c0-4 2-6 4-7M9 11c1 .3 2 1 3 2M12 13v5M9.5 15.5h5" fill="none" stroke="#fff" />
              </svg>
              Share
            </div>
          </div>
        </div>

        <Ribbon />

        {/* Formula bar */}
        <div className="flex h-[47px] shrink-0 items-start pt-[11px] text-[14px] text-[#444]">
          <div className="ml-[5px] flex h-[26px] w-[437px] items-center justify-between border border-[#c6c6c6] bg-white pl-[6px] pr-[8px]">
            A1
            <Caret />
          </div>
          <div className="ml-[14px] mt-[8px] flex h-[10px] w-px flex-col justify-between">
            <div className="h-px w-px bg-[#999]" />
            <div className="h-px w-px bg-[#999]" />
            <div className="h-px w-px bg-[#999]" />
          </div>
          <div className="ml-[15px] flex h-[26px] w-[110px] items-center border border-[#c6c6c6] bg-white text-[#bdbdbd]">
            <span className="w-[38px] text-center text-[16px]">✕</span>
            <span className="w-[34px] text-center text-[16px]">✓</span>
            <span className="w-[34px] text-center font-['Liberation_Serif',serif] text-[15px] font-bold italic text-[#777]">fx</span>
          </div>
          <div className="ml-[4px] flex h-[26px] w-[1329px] items-center justify-between border border-[#c6c6c6] bg-white pl-[11px] pr-[6px]">
            Translation job
            <svg width="8" height="5" viewBox="0 0 8 5"><path d="M.5.5L4 4 7.5.5" stroke="#666" strokeWidth="1.4" fill="none" /></svg>
          </div>
        </div>

        {/* Grid and vertical scrollbar */}
        <div className="flex h-[787px] shrink-0 overflow-hidden">
          <div className="h-[787px] w-[1899px] shrink-0 overflow-hidden border-b border-r border-[#a0a0a0]">
            <Sheet />
          </div>
          <div className="flex w-[22px] shrink-0 flex-col pl-[4px] pr-[4px] pt-[2px]">
            <div className="flex h-[15px] shrink-0 items-center justify-center border border-[#c6c6c6] bg-white">
              <svg width="7" height="4" viewBox="0 0 7 4"><path d="M0 4h7L3.5 0z" fill="#666" /></svg>
            </div>
            <div className="h-[734px] shrink-0 border border-[#ababab] bg-white" />
            <div className="h-[22px] shrink-0 bg-[#dbdbdb]" />
            <div className="flex h-[15px] shrink-0 items-center justify-center border border-[#c6c6c6] bg-white">
              <Caret />
            </div>
          </div>
        </div>

        {/* Sheet tabs and horizontal scrollbar */}
        <div className="flex h-[28px] shrink-0 items-start text-[12px]">
          <svg width="5" height="9" viewBox="0 0 5 9" className="ml-[27px] mt-[9px]"><path d="M5 0v9L0 4.5z" fill="#c4c4c4" /></svg>
          <svg width="5" height="9" viewBox="0 0 5 9" className="ml-[24px] mt-[9px]"><path d="M0 0v9l5-4.5z" fill="#c4c4c4" /></svg>
          <div className="ml-[40px] flex h-[25px] w-[53px] items-center justify-center border-b-2 border-l border-r border-[#217346] border-l-[#bbb] border-r-[#bbb] bg-white font-bold text-[#217346]">
            Data
          </div>
          <div className="flex h-[25px] w-[47px] items-center pl-[12px] text-[#444]">Info</div>
          <div className="mt-[4px] h-[18px] w-px bg-[#999]" />
          <svg width="16" height="16" viewBox="0 0 16 16" className="ml-[33px] mt-[5px]">
            <circle cx="8" cy="8" r="7.5" fill="none" stroke="#777" />
            <path d="M8 4v8M4 8h8" stroke="#666" strokeWidth="1.4" />
          </svg>
          <div className="ml-[919px] mt-[7px] flex h-[15px] items-stretch">
            <div className="flex w-[14px] items-center justify-center border border-[#c6c6c6] bg-white">
              <svg width="4" height="7" viewBox="0 0 4 7"><path d="M4 0v7L0 3.5z" fill="#666" /></svg>
            </div>
            <div className="w-[297px] border border-[#ababab] bg-white" />
            <div className="w-[403px] bg-[#dbdbdb]" />
            <div className="ml-[3px] flex w-[14px] items-center justify-center border border-[#c6c6c6] bg-white">
              <svg width="4" height="7" viewBox="0 0 4 7"><path d="M0 0v7l4-3.5z" fill="#666" /></svg>
            </div>
          </div>
        </div>

        {/* Status bar sliver */}
        <div className="flex h-[3px] shrink-0 border-t border-[#f1f1f1] bg-[#f1f1f1]">
          <div className="ml-[1631px] h-[3px] w-[38px] bg-[#b1b1b1]" />
        </div>
      </div>
    </div>
  );
}
